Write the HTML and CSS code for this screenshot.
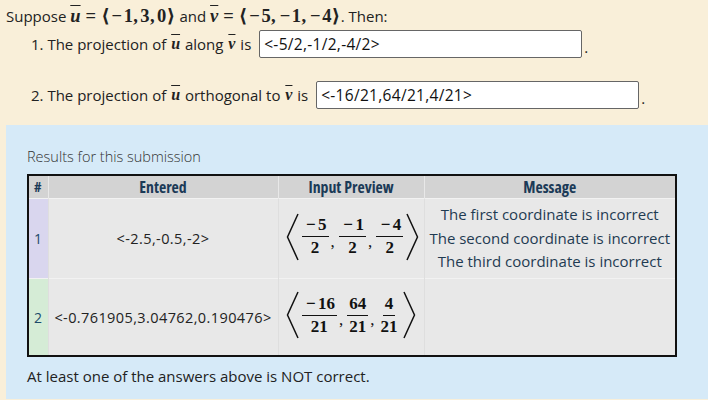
FILE: index.html
```html
<!DOCTYPE html>
<html>
<head>
<meta charset="utf-8">
<link rel="stylesheet" href="styles.css">
</head>
<body>
<div class="problem">
  <p class="intro">Suppose <span class="m"><span class="vec">u</span><span class="op">=</span>⟨<span class="mi">−</span>1<span class="sep">,</span>3<span class="sep">,</span>0⟩</span> and <span class="m"><span class="vec">v</span><span class="op">=</span>⟨<span class="mi">−</span>5<span class="sep">,</span><span class="mi">−</span>1<span class="sep">,</span><span class="mi">−</span>4⟩</span>. Then:</p>
  <ol class="parts">
    <li class="part part1">1. The projection of <span class="m"><span class="vec">u</span></span> along <span class="m"><span class="vec">v</span></span> is <span class="answer">&lt;-5/2,-1/2,-4/2&gt;</span> <span class="dot">.</span></li>
    <li class="part part2">2. The projection of <span class="m"><span class="vec">u</span></span> orthogonal to <span class="m"><span class="vec">v</span></span> is <span class="answer">&lt;-16/21,64/21,4/21&gt;</span> <span class="dot">.</span></li>
  </ol>
</div>
<div class="results">
  <h3 class="results-title">Results for this submission</h3>
  <table class="attempt">
    <colgroup><col class="w-num"><col class="w-ent"><col class="w-prev"><col class="w-msg"></colgroup>
    <thead>
      <tr><th class="c-num">#</th><th>Entered</th><th>Input Preview</th><th>Message</th></tr>
    </thead>
    <tbody>
      <tr class="row1">
        <td class="num n1">1</td>
        <td class="ent">&lt;-2.5,-0.5,-2&gt;</td>
        <td class="prev">
          <span class="tuple">
            <svg class="ang" width="15" height="48" viewBox="0 0 15 48"><polyline points="13,1 2.5,24 13,47" fill="none" stroke="#111" stroke-width="1.5"/></svg>
            <span class="frac"><span class="nu"><span class="mi">−</span>5</span><span class="de">2</span></span><span class="comma">,</span>
            <span class="frac"><span class="nu"><span class="mi">−</span>1</span><span class="de">2</span></span><span class="comma">,</span>
            <span class="frac"><span class="nu"><span class="mi">−</span>4</span><span class="de">2</span></span>
            <svg class="ang" width="15" height="48" viewBox="0 0 15 48"><polyline points="2,1 12.5,24 2,47" fill="none" stroke="#111" stroke-width="1.5"/></svg>
          </span>
        </td>
        <td class="msg">The first coordinate is incorrect<br>The second coordinate is incorrect<br>The third coordinate is incorrect</td>
      </tr>
      <tr class="row2">
        <td class="num n2">2</td>
        <td class="ent">&lt;-0.761905,3.04762,0.190476&gt;</td>
        <td class="prev">
          <span class="tuple">
            <svg class="ang" width="15" height="48" viewBox="0 0 15 48"><polyline points="13,1 2.5,24 13,47" fill="none" stroke="#111" stroke-width="1.5"/></svg>
            <span class="frac"><span class="nu"><span class="mi">−</span>16</span><span class="de">21</span></span><span class="comma">,</span>
            <span class="frac"><span class="nu">64</span><span class="de">21</span></span><span class="comma">,</span>
            <span class="frac"><span class="nu">4</span><span class="de">21</span></span>
            <svg class="ang" width="15" height="48" viewBox="0 0 15 48"><polyline points="2,1 12.5,24 2,47" fill="none" stroke="#111" stroke-width="1.5"/></svg>
          </span>
        </td>
        <td class="msg"></td>
      </tr>
    </tbody>
  </table>
  <p class="summary">At least one of the answers above is NOT correct.</p>
</div>
</body>
</html>
```
FILE: styles.css
```css
html, body {
  margin: 0;
  padding: 0;
}
body {
  background: #f9efd9;
  font-family: "Open Sans", "Noto Sans", sans-serif;
  color: #222;
  font-size: 15px;
  width: 708px;
  height: 400px;
  overflow: hidden;
}
.problem {
  padding: 4px 0 0 6px;
}
.intro {
  margin: 0;
  height: 24px;
  line-height: 24px;
  white-space: nowrap;
}
.m {
  font-family: "Liberation Serif", "DejaVu Serif", serif;
  font-weight: bold;
  font-size: 18.5px;
  letter-spacing: 0.4px;
  white-space: nowrap;
}
.vec {
  font-style: italic;
  text-decoration: overline;
  text-decoration-thickness: 1px;
  letter-spacing: 0;
}
.op {
  margin: 0 6px;
  letter-spacing: 0;
}
.intro .m + .m .op,
.intro .op {
  margin: 0 5px;
}
.mi {
  display: inline-block;
  width: 0.74em;
  text-align: center;
  letter-spacing: 0;
}
.sep {
  margin-right: 2px;
}
.parts {
  list-style: none;
  margin: 0;
  padding: 0 0 0 25px;
}
.part {
  display: flex;
  align-items: center;
  white-space: pre;
  height: 28px;
}
.part .m {
  font-size: 16px;
}
.part .vec {
  padding: 0 1px;
}
.part1 {
  margin-top: 2px;
}
.part2 {
  margin-top: 23px;
}
.answer {
  display: inline-block;
  box-sizing: border-box;
  width: 323px;
  height: 28px;
  line-height: 26px;
  background: #fff;
  border: 1px solid #666;
  border-radius: 2px;
  padding: 0 4px;
  margin-left: 4px;
  font-size: 15.5px;
  letter-spacing: 0.3px;
  color: #111;
}
.dot {
  margin-left: 2px;
  padding-top: 6px;
}
.results {
  box-sizing: border-box;
  margin: 16px 0 0 6px;
  background: #d6eaf8;
  padding: 22px 0 0 21px;
  height: 274px;
}
.results-title {
  margin: 0 0 7px 0;
  font-weight: 300;
  font-size: 14.5px;
  color: #333;
  line-height: 20px;
}
.attempt {
  border-collapse: collapse;
  border: 2px solid #111;
  width: 650px;
  table-layout: fixed;
}
.w-num { width: 20px; }
.w-ent { width: 230px; }
.w-prev { width: 146px; }
.attempt th {
  background: #d3d3d3;
  color: #1b3a57;
  font-weight: bold;
  font-size: 15.8px;
  font-stretch: 86%;
  height: 22px;
  line-height: 18px;
  padding: 0;
  border-left: 1px solid #e8e8e8;
}
.attempt th.c-num { text-align: left; padding-left: 5px; font-size: 14.5px; }
.attempt td {
  background: #e8e8e8;
  border-left: 1px solid #dedede;
  border-top: 1px solid #f2f2f2;
  padding: 0;
  text-align: center;
  color: #222;
}
.row1 td { height: 79px; }
.row2 td { height: 76px; }
.attempt td.num {
  text-align: left;
  padding-left: 5px;
  color: #1b4a6a;
  font-size: 14px;
}
.attempt td.n1 { background: #d9d6ee; }
.attempt td.n2 { background: #d5ecd6; }
.ent {
  font-size: 14.5px;
  letter-spacing: 0.4px;
  white-space: nowrap;
}
.attempt td.prev { text-align: left; padding-left: 5px; }
.tuple {
  display: inline-flex;
  align-items: center;
  white-space: nowrap;
  font-family: "Liberation Serif", "DejaVu Serif", serif;
  font-weight: bold;
  font-size: 17px;
  color: #111;
}
.tuple .mi {
  width: 0.86em;
}
.frac {
  display: inline-flex;
  flex-direction: column;
  align-items: center;
  margin: 0 1px;
}
.nu {
  padding: 0 2px 2px;
  border-bottom: 1.3px solid #111;
  line-height: 18px;
  white-space: nowrap;
}
.de {
  padding: 2px 2px 0;
  line-height: 18px;
}
.comma {
  align-self: center;
  margin: 10px 3px 0 1px;
  font-weight: normal;
}
.ang { margin: 0 1px; }
.msg {
  font-size: 15px;
  line-height: 23.5px;
}
.attempt td.msg { color: #1f3b52; }
.summary {
  margin: 9px 0 0;
  font-size: 15px;
  color: #222;
}
```
